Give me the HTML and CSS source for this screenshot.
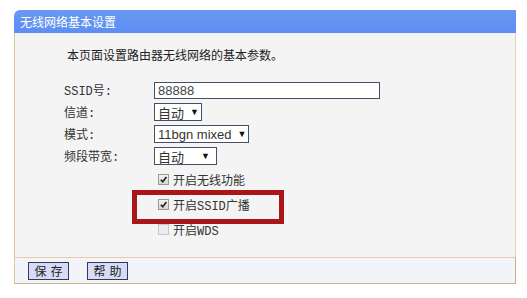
FILE: index.html
```html
<!DOCTYPE html>
<html lang="zh-CN">
<head>
    <meta charset="UTF-8">
    <title>无线网络基本设置</title>
    <link rel="stylesheet" href="styles.css">
</head>
<body>
    <div class="panel">
        <div class="panel-title">无线网络基本设置</div>
        <div class="panel-body">
            <p class="intro">本页面设置路由器无线网络的基本参数。</p>
            <div class="form">
                <div class="row">
                    <span class="label">SSID号:</span>
                    <input class="text-input" type="text" value="88888">
                </div>
                <div class="row">
                    <span class="label">信道:</span>
                    <span class="select select-channel">自动<span class="arrow">▼</span></span>
                </div>
                <div class="row">
                    <span class="label">模式:</span>
                    <span class="select select-mode">11bgn mixed<span class="arrow">▼</span></span>
                </div>
                <div class="row">
                    <span class="label">频段带宽:</span>
                    <span class="select select-width">自动<span class="arrow">▼</span></span>
                </div>
                <div class="row check-row">
                    <span class="label"></span>
                    <span class="check checked"><svg viewBox="0 0 10 10"><path d="M2 5.2 L4.2 7.6 L8.2 2.2" /></svg></span>
                    <span class="check-text">开启无线功能</span>
                </div>
                <div class="row check-row marked">
                    <span class="label"></span>
                    <span class="check checked"><svg viewBox="0 0 10 10"><path d="M2 5.2 L4.2 7.6 L8.2 2.2" /></svg></span>
                    <span class="check-text">开启SSID广播</span>
                </div>
                <div class="row check-row">
                    <span class="label"></span>
                    <span class="check disabled"></span>
                    <span class="check-text">开启WDS</span>
                </div>
            </div>
        </div>
        <div class="panel-footer">
            <button class="btn">保存</button>
            <button class="btn">帮助</button>
        </div>
    </div>
</body>
</html>
```
FILE: styles.css
```css
body {
    margin: 0;
    background: #ffffff;
    font-family: 'Noto Sans CJK SC', sans-serif;
    font-size: 12px;
    color: #222;
}

.panel {
    margin: 10px 0 0 14px;
    width: 502px;
}

.panel-title {
    height: 23px;
    line-height: 23px;
    padding-left: 6px;
    background: linear-gradient(#6a98f2, #5c8ef3);
    color: #ffffff;
    border-top-left-radius: 6px;
    font-size: 12px;
}

.panel-body {
    height: 225px;
    background: #f4f4f4;
    border-left: 1px solid #dfc7a0;
    border-right: 1px solid #e8d4a8;
    border-bottom: 1px solid #e4cda2;
    box-sizing: border-box;
}

.intro {
    margin: 0;
    padding: 14px 0 0 52px;
    line-height: 16px;
    color: #222;
}

.form {
    margin-top: 16px;
    padding-left: 49px;
}

.row {
    display: flex;
    align-items: center;
    height: 22px;
}

.label {
    width: 90px;
    flex-shrink: 0;
    font-family: 'Liberation Mono', 'Noto Sans CJK SC', monospace;
    font-size: 12px;
    color: #333;
}

.text-input {
    width: 226px;
    height: 17px;
    box-sizing: border-box;
    border: 1px solid #445066;
    padding: 0 3px;
    font-family: 'Liberation Sans', sans-serif;
    font-size: 13px;
    color: #444;
    background: #ffffff;
}

.select {
    display: flex;
    align-items: center;
    height: 18px;
    box-sizing: border-box;
    border: 1px solid #445066;
    background: #ffffff;
    padding: 0 0 0 3px;
    font-family: 'Liberation Sans', 'Noto Sans CJK SC', sans-serif;
    font-size: 13px;
    color: #333;
    white-space: nowrap;
    overflow: hidden;
}

.select-channel {
    width: 48px;
}

.select-mode {
    width: 95px;
}

.select-width {
    width: 63px;
}

.arrow {
    font-size: 9px;
    color: #111;
    margin-left: auto;
    margin-right: 6px;
}

.select-channel .arrow,
.select-mode .arrow {
    margin-left: 6px;
}

.check-row {
    height: 25px;
    position: relative;
}

.check {
    width: 9px;
    height: 9px;
    margin-left: 4px;
    margin-right: 4px;
    border: 1px solid #9a9a9a;
    background: linear-gradient(#f2f2f2, #d6d6d6);
    display: flex;
}

.check svg {
    width: 9px;
    height: 9px;
}

.check svg path {
    fill: none;
    stroke: #222;
    stroke-width: 1.8;
}

.check.disabled {
    border-color: #c8c8c8;
    background: #ececec;
}

.check-text {
    font-family: 'Liberation Mono', 'Noto Sans CJK SC', monospace;
    font-size: 12px;
    color: #333;
}

/* red highlight around the SSID broadcast option */
.marked::after {
    content: '';
    position: absolute;
    left: 68px;
    top: -2px;
    width: 142px;
    height: 24px;
    border: 5px solid #a8151a;
    pointer-events: none;
}

.panel-footer {
    height: 26px;
    display: flex;
    align-items: center;
    gap: 18px;
    padding-left: 13px;
    background: #f3f4fa;
    border-left: 1px solid #dfc7a0;
    border-right: 1px solid #c8ad88;
    border-bottom: 1px solid #cdb48e;
    box-sizing: border-box;
}

.btn {
    width: 41px;
    height: 18px;
    padding: 0;
    border: 1px solid #333a55;
    background: #d6dcf6;
    font-family: 'Noto Sans CJK SC', sans-serif;
    font-size: 12px;
    letter-spacing: 4px;
    text-indent: 4px;
    color: #222;
    line-height: 16px;
}
```
